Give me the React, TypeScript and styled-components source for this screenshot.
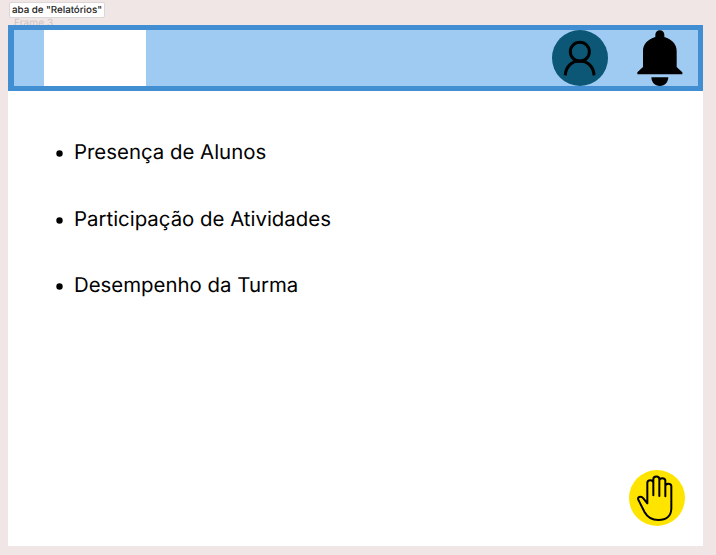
import React from "react";
import styled, { createGlobalStyle } from "styled-components";

const GlobalStyle = createGlobalStyle`
  * { box-sizing: border-box; }
  body {
    margin: 0;
    background: #f0e6e5;
    font-family: Inter, sans-serif;
    text-rendering: geometricPrecision;
  }
`;

const Canvas = styled.main`
  width: 716px;
  height: 555px;
  padding: 25px 13px 9px 8px;
  position: relative;
  overflow: hidden;
`;

const Tag = styled.div`
  position: absolute;
  left: 9px;
  top: 2px;
  width: 96px;
  height: 16px;
  padding-left: 2px;
  border: 1px solid #dcd7d6;
  border-radius: 2px;
  background: #fff;
  color: #222;
  font-size: 9.8px;
  font-weight: 500;
  line-height: 15px;
  letter-spacing: -0.04px;
  white-space: nowrap;
`;

const FrameLabel = styled.div`
  position: absolute;
  left: 14px;
  top: 17px;
  color: #cdc4c3;
  font-size: 10px;
  line-height: 12px;
  letter-spacing: 0.1px;
`;

const Frame = styled.section`
  position: relative;
  height: 521px;
  background: #fff;
  display: flex;
  flex-direction: column;
`;

const Header = styled.header`
  height: 66px;
  flex: none;
  display: flex;
  align-items: center;
  border: 5px solid #428ed3;
  border-left-width: 6px;
  background: #9fcaf2;
  padding: 0 15px 0 29.5px;
`;

const Logo = styled.div`
  width: 102px;
  height: 56px;
  background: #fff;
`;

const Actions = styled.div`
  margin-left: auto;
  display: flex;
  align-items: center;
  gap: 29px;
`;

const Icon = styled.svg<{ $w: number; $h?: number }>`
  display: block;
  flex: none;
  width: ${(p) => p.$w}px;
  height: ${(p) => p.$h ?? p.$w}px;
`;

const Reports = styled.ul`
  list-style: none;
  margin: 0;
  padding: 44px 0 0 47.5px;
  display: flex;
  flex-direction: column;
  gap: 32.5px;
`;

const Report = styled.li`
  display: flex;
  align-items: center;
  height: 34px;
  color: #000;
  font-size: 20.4px;
  font-weight: 400;
  line-height: 34px;
  white-space: nowrap;
`;

const Bullet = styled.svg`
  width: 7px;
  height: 7px;
  margin: 3px 11.5px 0 0;
`;

const HelpButton = styled.button`
  position: absolute;
  right: 18px;
  bottom: 20px;
  padding: 0;
  border: 0;
  background: none;
`;

const UserIcon = () => (
  <Icon $w={56} viewBox="36 30 168 168">
    <circle cx="120" cy="114" r="84" fill="#0b5775" />
    <g fill="none" stroke="#000" strokeWidth="9">
      <circle cx="119.500" cy="95" r="28.500" />
      <path d="M76 166C77 140 95 123 119 123s42 17 43 43" />
    </g>
  </Icon>
);

const BellIcon = () => (
  <Icon $w={46} $h={56} viewBox="36 29 138 168">
    <path d="M91 50V43a13.500 13.500 0 0 1 27 0v7c23 7 37 22 37 42v48l17 16v6H37v-6l17-16V92c0-20 14-35 37-42Z" />
    <path d="M79 171h51c-1 16-10 26-25.500 26S80 187 79 171Z" />
  </Icon>
);

const HandIcon = () => (
  <Icon $w={56} viewBox="27 24 168 168">
    <circle cx="111" cy="108" r="84" fill="#ffe400" />
    <path
      d="M82 124V62c0-10 18-10 18 0v38V52c0-11 18-11 18 0v50V56c0-10 18-10 18 0v47V73c0-10 18-10 18 0v66c0 23-15 35-39 35-21 0-33-9-42-25L56 115c-7-10 7-15 14-6l12 15"
      fill="none"
      stroke="#000"
      strokeWidth="6"
      strokeLinecap="round"
      strokeLinejoin="round"
    />
  </Icon>
);

const reports = [
  "Presença de Alunos",
  "Participação de Atividades",
  "Desempenho da Turma",
];

export default function App() {
  return (
    <>
      <GlobalStyle />
      <Canvas>
        <FrameLabel>Frame 3</FrameLabel>
        <Tag>aba de "Relatórios"</Tag>
        <Frame>
          <Header>
            <Logo />
            <Actions>
              <UserIcon />
              <BellIcon />
            </Actions>
          </Header>
          <Reports>
            {reports.map((name) => (
              <Report key={name}>
                <Bullet viewBox="0 0 7 7">
                  <circle cx="3.5" cy="3.5" r="3.2" />
                </Bullet>
                {name}
              </Report>
            ))}
          </Reports>
          <HelpButton aria-label="Levantar a mão">
            <HandIcon />
          </HelpButton>
        </Frame>
      </Canvas>
    </>
  );
}
